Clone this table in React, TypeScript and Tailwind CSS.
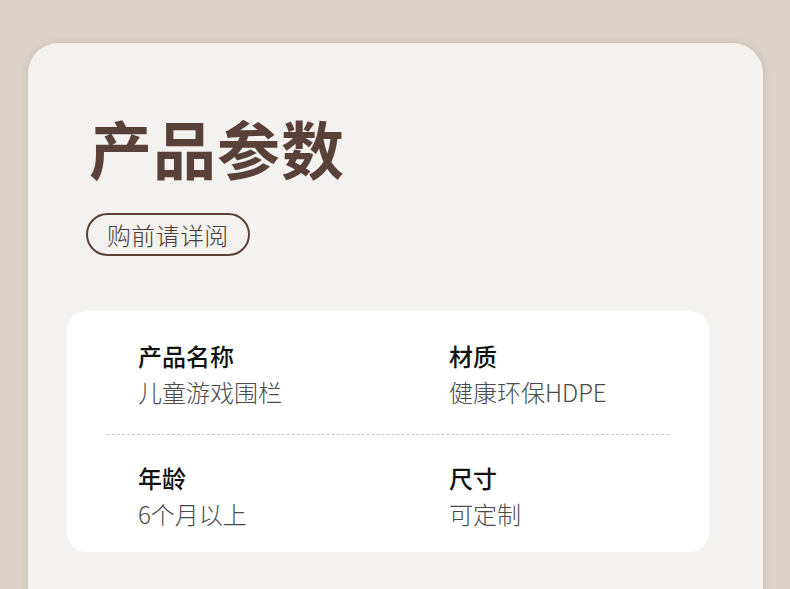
import React from 'react';

const specs = [
  [
    { label: '产品名称', value: '儿童游戏围栏' },
    { label: '材质', value: '健康环保HDPE' },
  ],
  [
    { label: '年龄', value: '6个月以上' },
    { label: '尺寸', value: '可定制' },
  ],
];

function SpecRow({ items, first }: { items: { label: string; value: string }[]; first: boolean }) {
  return (
    <div className={`grid grid-cols-[311px_1fr] pl-[71px] ${first ? 'pt-[30px]' : 'pt-[28px]'}`}>
      {items.map((item) => (
        <div key={item.label} className="flex flex-col">
          <span className="text-[24px] leading-[30px] font-medium text-[#111111]">{item.label}</span>
          <span className="mt-[6px] text-[24px] leading-[30px] font-light text-[#4a4a4a]">{item.value}</span>
        </div>
      ))}
    </div>
  );
}

export default function App() {
  return (
    <div
      className="w-[790px] h-[589px] overflow-hidden bg-[#dbd3ca] pt-[43px] pl-[28px]"
      style={{ fontFamily: '"Noto Sans CJK SC", "Noto Sans", sans-serif' }}
    >
      <div className="w-[735px] h-[600px] rounded-t-[30px] bg-[#f3f2f0] border-t border-[#f6ece0] shadow-[0_0_6px_rgba(120,100,80,0.25)] px-[39px] pt-[71px]">
        <div className="pl-[19px]">
          <h1 className="ml-[3px] text-[63px] leading-[63px] font-bold text-[#5a4137] tracking-[1px]">产品参数</h1>
          <div className="mt-[35px] inline-flex h-[43px] items-center rounded-full border-2 border-[#5a4137] px-[19px]">
            <span className="text-[24px] leading-none font-light tracking-[0.3px] text-[#4a3a33]">购前请详阅</span>
          </div>
        </div>

        <div className="mt-[55px] w-[642px] rounded-[20px] bg-white pb-[23px]">
          <SpecRow items={specs[0]} first />
          <div className="mx-[40px] mt-[27px] border-t border-dashed border-[#c9c9c9]" />
          <SpecRow items={specs[1]} first={false} />
        </div>
      </div>
    </div>
  );
}
